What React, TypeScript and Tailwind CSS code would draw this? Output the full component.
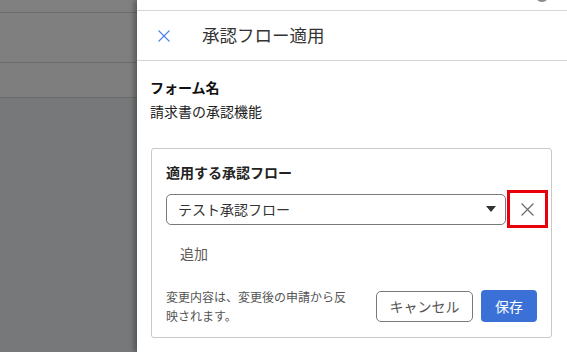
import React from "react";

const font = { fontFamily: '"Noto Sans CJK JP", "Noto Sans", sans-serif' };

function CloseIcon({ className }: { className?: string }) {
  return (
    <svg viewBox="0 0 12 12" className={className} fill="none" stroke="currentColor">
      <path d="M0.5 0.5 L11.5 11.5 M11.5 0.5 L0.5 11.5" strokeWidth="1.1" />
    </svg>
  );
}

export default function App() {
  return (
    <div className="flex h-[352px] w-[567px] overflow-hidden bg-white" style={font}>
      {/* dimmed page behind the drawer */}
      <div className="flex w-[137px] shrink-0 flex-col bg-[#77787a]">
        <div className="h-[12px] bg-[#808080]" />
        <div className="h-[1px] bg-[#6c6c6c]" />
        <div className="h-[49px] bg-[#7f7f7f]" />
        <div className="h-[1px] bg-[#6c6c6c]" />
        <div className="h-[34px] bg-[#7e7e7e]" />
        <div className="h-[1px] bg-[#6a6b6c]" />
      </div>

      <div className="relative flex flex-1 flex-col bg-white shadow-[-3px_0_5px_rgba(0,0,0,0.3)]">
        <div className="flex h-[11px] justify-end border-b border-[#d6d6d6] pr-[18px]">
          <div className="-mt-[12px] h-[14px] w-[14px] rounded-full bg-[#8a8a8f]" />
        </div>

        <div className="flex h-[50px] items-center border-b border-[#d6d6d6] pl-[21px]">
          <CloseIcon className="h-[12px] w-[12px] text-[#4f7ef5]" />
          <h1 className="ml-[32px] text-[17.5px] text-[#333]">承認フロー適用</h1>
        </div>

        <div className="px-[13px] pt-[16px]">
          <p className="text-[14px] font-bold leading-[20px] text-[#111]">フォーム名</p>
          <p className="mt-[4px] text-[14px] leading-[20px] text-[#222]">請求書の承認機能</p>

          <div className="mt-[27px] ml-[1px] w-[401px] rounded-[3px] border border-[#c9c9c9] px-[14px] pb-[12px] pt-[13px]">
            <p className="text-[14px] font-bold leading-[20px] text-[#222]">適用する承認フロー</p>

            <div className="mt-[8px] flex items-center gap-[1px]">
              <div className="flex h-[31px] w-[340px] shrink-0 items-center justify-between rounded-[5px] border border-[#7a7a7a] pl-[11px] pr-[9px]">
                <span className="text-[14px] text-[#333]">テスト承認フロー</span>
                <svg viewBox="0 0 10 6" className="h-[6px] w-[10px] text-[#333]">
                  <path d="M0 0 H10 L5 6 Z" fill="currentColor" />
                </svg>
              </div>
              <button className="flex h-[38px] w-[41px] shrink-0 items-center justify-center border-[3px] border-[#e8000b] bg-white">
                <CloseIcon className="h-[13px] w-[13px] text-[#6b6b6b]" />
              </button>
            </div>

            <button className="ml-[14px] mt-[15px] text-[14px] leading-[20px] text-[#5f5b57]">追加</button>

            <div className="mt-[23px] flex items-center justify-between">
              <p className="w-[190px] text-[12px] leading-[19px] text-[#555]">
                変更内容は、変更後の申請から反映されます。
              </p>
              <div className="flex items-center gap-[8px]">
                <button className="h-[31px] w-[97px] rounded-[5px] border border-[#7a7a7a] bg-white text-[14px] text-[#555]">
                  キャンセル
                </button>
                <button className="h-[32px] w-[56px] rounded-[4px] bg-[#3b71d6] text-[14px] text-white">
                  保存
                </button>
              </div>
            </div>
          </div>
        </div>
      </div>
    </div>
  );
}
